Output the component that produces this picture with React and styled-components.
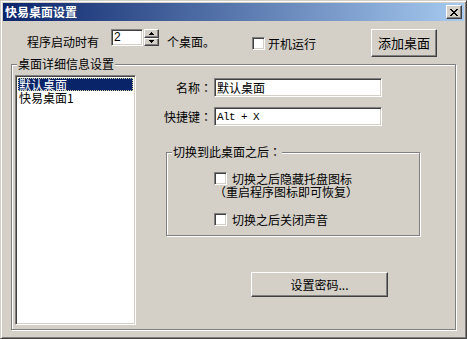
import React from 'react';
import styled, { createGlobalStyle } from 'styled-components';

const GlobalStyle = createGlobalStyle`
  html, body { margin: 0; padding: 0; background: #d4d0c8; }
  body {
    font-family: "Noto Sans CJK SC", "Noto Sans", sans-serif;
    font-size: 12px;
    color: #000;
  }
  * { box-sizing: border-box; }
`;

const Window = styled.div`
  width: 467px;
  height: 339px;
  background: #d4d0c8;
  border: 1px solid;
  border-color: #d4d0c8 #404040 #404040 #d4d0c8;
  box-shadow: inset 1px 1px 0 #fff, inset -1px -1px 0 #808080;
  padding: 2px;
  display: flex;
  flex-direction: column;
`;

const TitleBar = styled.div`
  height: 18px;
  display: flex;
  align-items: center;
  justify-content: space-between;
  padding: 0 2px;
  background: linear-gradient(to right, #0a246a, #a6caf0);
`;

const Title = styled.span`
  color: #fff;
  font-weight: bold;
  font-size: 12px;
  line-height: 14px;
`;

const raised = `
  background: #d4d0c8;
  border: 1px solid;
  border-color: #fff #404040 #404040 #fff;
  box-shadow: inset -1px -1px 0 #808080, inset 1px 1px 0 #d4d0c8;
`;

const sunken = `
  background: #fff;
  border: 1px solid;
  border-color: #808080 #fff #fff #808080;
  box-shadow: inset 1px 1px 0 #404040, inset -1px -1px 0 #d4d0c8;
`;

const CloseButton = styled.div`
  ${raised}
  width: 16px;
  height: 14px;
  display: flex;
  align-items: center;
  justify-content: center;
`;

const TopRow = styled.div`
  display: flex;
  align-items: flex-start;
  height: 28px;
  margin-top: 8px;
  padding-left: 24px;
`;

const Text = styled.span`
  line-height: 12px;
  white-space: nowrap;
  margin-top: ${p => p.$top || 0}px;
  margin-left: ${p => p.$left || 0}px;
`;

// centred full-width punctuation, as the dialog's system font draws it
const Punct = styled.span`
  font-family: "Noto Sans CJK JP", "Noto Sans CJK SC", sans-serif;
`;

const Spinner = styled.div`
  display: flex;
  margin-left: ${p => p.$left}px;
`;

const SpinField = styled.div`
  ${sunken}
  width: 32px;
  height: 17px;
  padding: 1px 0 0 2px;
  font-family: "Liberation Sans", sans-serif;
  font-size: 12px;
  line-height: 13px;
`;

const SpinButtons = styled.div`
  display: flex;
  flex-direction: column;
  margin-left: 1px;
  width: 15px;
  height: 17px;
`;

const SpinButton = styled.div`
  ${raised}
  flex: 1;
  display: flex;
  align-items: center;
  justify-content: center;
`;

const CheckLabel = styled.div`
  display: flex;
  align-items: center;
  gap: ${p => p.$gap || 3}px;
  margin-top: ${p => p.$top || 0}px;
  margin-left: ${p => p.$left || 0}px;
  height: 13px;
  line-height: 12px;
  white-space: nowrap;
`;

const CheckBox = styled.span`
  ${sunken}
  display: block;
  width: 13px;
  height: 13px;
  flex: none;
`;

const Button = styled.div`
  ${raised}
  width: ${p => p.$w}px;
  height: ${p => p.$h}px;
  margin-left: ${p => p.$left || 0}px;
  margin-top: ${p => p.$top || 0}px;
  display: flex;
  align-items: center;
  justify-content: center;
  font-size: ${p => p.$size || 12}px;
  line-height: 14px;
  flex: none;
`;

const Group = styled.fieldset`
  margin: ${p => p.$margin};
  padding: ${p => p.$padding};
  border: 1px solid #808080;
  box-shadow: inset 1px 1px 0 #fff, 1px 1px 0 #fff;
  min-width: 0;
  width: ${p => p.$w ? `${p.$w}px` : 'auto'};
  height: ${p => p.$h ? `${p.$h}px` : 'auto'};
  flex: ${p => p.$grow ? 1 : 'none'};
  display: ${p => p.$flex ? 'flex' : 'block'};
`;

const Legend = styled.legend`
  font-size: 12px;
  line-height: 12px;
  padding: 0 1px;
  margin-left: ${p => p.$left}px;
  background: #d4d0c8;
`;

const GroupBody = styled.div`
  display: flex;
  flex-direction: column;
  align-items: flex-start;
  padding-top: 14px;
`;

const ListBox = styled.div`
  ${sunken}
  width: 121px;
  flex: none;
  padding: 2px;
`;

const ListItem = styled.div`
  height: 13px;
  line-height: 13px;
  padding-left: 1px;
  white-space: nowrap;
  color: ${p => p.$selected ? '#fff' : '#000'};
  background: ${p => p.$selected ? '#0a246a' : 'transparent'};
  outline: ${p => p.$selected ? '1px dotted #d8d0a0' : 'none'};
  outline-offset: -1px;
`;

const RightPane = styled.div`
  flex: 1;
  display: flex;
  flex-direction: column;
  align-items: flex-start;
`;

const FormRow = styled.div`
  display: flex;
  align-items: center;
  margin-left: 14px;
  margin-top: ${p => p.$top}px;
`;

const FieldLabel = styled.span`
  width: 62px;
  text-align: right;
  line-height: 12px;
  margin-right: 2px;
  white-space: nowrap;
`;

const TextField = styled.div`
  ${sunken}
  width: 168px;
  height: 19px;
  padding: 2px 0 0 2px;
  line-height: 14px;
  font-family: ${p => p.$mono ? '"Liberation Mono", monospace' : 'inherit'};
  font-size: ${p => p.$mono ? 11 : 12}px;
  letter-spacing: ${p => p.$mono ? '-0.6px' : 'normal'};
  white-space: pre;
`;

const Note = styled.div`
  line-height: 12px;
  margin-top: 1px;
  margin-left: ${p => p.$left}px;
  white-space: nowrap;
`;

const ArrowIcon = ({ up }) => (
  <svg width="5" height="3" viewBox="0 0 5 3" shapeRendering="crispEdges">
    <path d={up ? 'M2 0h1v1h1v1h1v1H0V2h1V1h1z' : 'M0 0h5v1H4v1H3v1H2V2H1V1H0z'} fill="#000" />
  </svg>
);

const CloseIcon = () => (
  <svg width="8" height="7" viewBox="0 0 8 7" shapeRendering="crispEdges">
    {[0, 1, 2, 3, 4, 5, 6].map(i => (
      <React.Fragment key={i}>
        <rect x={i} y={i} width="2" height="1" fill="#000" />
        <rect x={6 - i} y={i} width="2" height="1" fill="#000" />
      </React.Fragment>
    ))}
  </svg>
);

export default function App() {
  return (
    <>
      <GlobalStyle />
      <Window>
        <TitleBar>
          <Title>快易桌面设置</Title>
          <CloseButton><CloseIcon /></CloseButton>
        </TitleBar>

        <TopRow>
          <Text $top={7}>程序启动时有</Text>
          <Spinner $left={12}>
            <SpinField>2</SpinField>
            <SpinButtons>
              <SpinButton><ArrowIcon up /></SpinButton>
              <SpinButton><ArrowIcon /></SpinButton>
            </SpinButtons>
          </Spinner>
          <Text $top={7} $left={8}>个桌面。</Text>
          <CheckLabel $top={8} $left={37}>
            <CheckBox />开机运行
          </CheckLabel>
          <Button $w={66} $h={28} $left={55} $size={13}>添加桌面</Button>
        </TopRow>

        <Group $flex $grow $margin="1px 8px 6px 8px" $padding="5px 4px 4px 3px">
          <Legend $left={2}>桌面详细信息设置</Legend>
          <ListBox>
            <ListItem $selected>默认桌面</ListItem>
            <ListItem>快易桌面1</ListItem>
          </ListBox>
          <RightPane>
            <FormRow $top={3}>
              <FieldLabel>名称<Punct>：</Punct></FieldLabel>
              <TextField>默认桌面</TextField>
            </FormRow>
            <FormRow $top={10}>
              <FieldLabel>快捷键<Punct>：</Punct></FieldLabel>
              <TextField $mono>Alt + X</TextField>
            </FormRow>

            <Group $w={254} $h={90} $margin="20px 0 0 30px" $padding="0">
              <Legend $left={5}>切换到此桌面之后<Punct>：</Punct></Legend>
              <GroupBody>
                <CheckLabel $gap={5} $left={47}>
                  <CheckBox />切换之后隐藏托盘图标
                </CheckLabel>
                <Note $left={47}><Punct>（</Punct>重启程序图标即可恢复<Punct>）</Punct></Note>
                <CheckLabel $gap={5} $top={15} $left={47}>
                  <CheckBox />切换之后关闭声音
                </CheckLabel>
              </GroupBody>
            </Group>

            <Button $w={137} $h={25} $left={115} $top={36}>设置密码...</Button>
          </RightPane>
        </Group>
      </Window>
    </>
  );
}
